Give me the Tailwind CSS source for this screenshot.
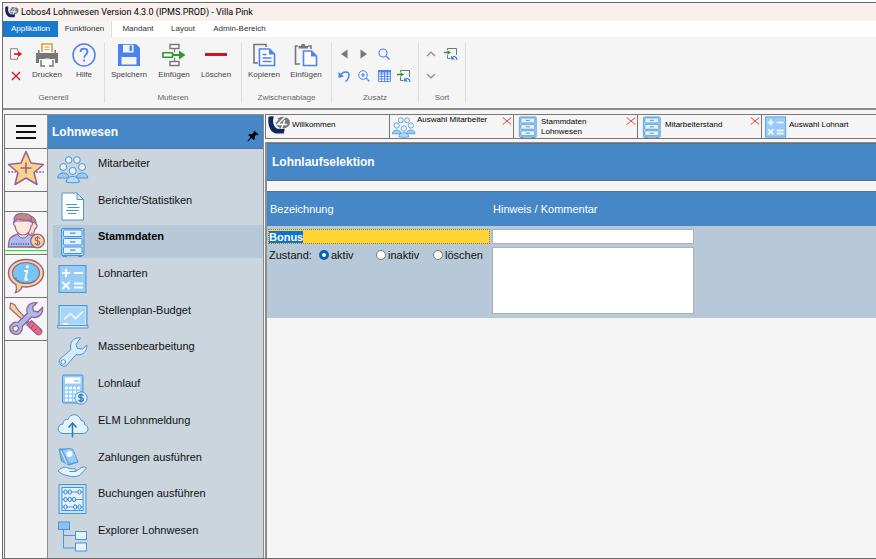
<!DOCTYPE html>
<html lang="de">
<head>
<meta charset="utf-8">
<meta name="viewport" content="width=device-width, initial-scale=1">
<title>Lobos4 Lohnwesen</title>
<script src="https://cdn.jsdelivr.net/npm/@tailwindcss/browser@4"></script>
</head>
<body class="bg-white pl-0.5 pt-0.5 font-['Liberation_Sans',Arial,sans-serif] text-[#1b1b1b]">

<svg class="hidden" aria-hidden="true">
  <symbol id="logo" viewBox="0 0 24 20">
    <path d="M.5 1.500C2 .6 4 .6 6 1c-1.500 6-.5 10.500 3.500 13h8l-1 4.800H8C2 17.500-.5 10 .5 1.500z" fill="#14265f"/>
    <ellipse cx="15.500" cy="7.500" rx="7.500" ry="6" fill="#77777f"/>
    <path d="M18 1.500L10 9.500h10M17.500 5L14 14M10.500 3.500L8 7" fill="none" stroke="#fff" stroke-width="1.500"/>
  </symbol>
  <symbol id="people" viewBox="0 0 32 32">
    <g stroke="#4a93d4" stroke-width="1">
      <g fill="#e4f2fd"><circle cx="11.700" cy="7" r="3.300"/><circle cx="20" cy="7" r="3.300"/><circle cx="6.300" cy="14" r="3.500"/><circle cx="25" cy="14" r="3.500"/></g>
      <path d="M.6 25c0-3.500 2.500-5 5.700-5s5.700 1.500 5.700 5zM19.400 25c0-3.500 2.500-5 5.700-5s5.700 1.500 5.700 5z" fill="#98ccf8"/>
      <circle cx="15.700" cy="18" r="3.600" fill="#e4f2fd"/>
      <path d="M9 29c.5-3.500 3-5.500 6.700-5.500s6.200 2 6.700 5.500c-4 1-9.400 1-13.400 0z" fill="#b5dafa"/>
    </g>
  </symbol>
  <symbol id="doc" viewBox="0 0 32 32">
    <path d="M5 3h15l6.500 6.500V30H5z" fill="#fff" stroke="#4a93d4"/>
    <path d="M20 3v6.500h6.500z" fill="#d8ecfd" stroke="#4a93d4"/>
    <path d="M9 14.500h11M10.500 17.500h12M9 20.500h13M11 23.500h8" stroke="#4a93d4"/>
  </symbol>
  <symbol id="drawer" viewBox="0 0 32 32">
    <path d="M6 28.500h4V31H6zM21 28.500h4V31h-4z" fill="#4a93d4"/>
    <rect x="4.500" y="2.500" width="22.500" height="27" rx="1.500" fill="#a9d4f9" stroke="#4a93d4"/>
    <g fill="#e4f2fd" stroke="#4a93d4"><rect x="6.500" y="4" width="18.500" height="6.500" rx=".8"/><rect x="6.500" y="12.500" width="18.500" height="6.500" rx=".8"/><rect x="6.500" y="21" width="18.500" height="6.500" rx=".8"/></g>
    <path d="M13 7.200h5.500M13 15.800h5.500M13 24.200h5.500" stroke="#4a93d4" stroke-width="1.200"/>
  </symbol>
  <symbol id="mathops" viewBox="0 0 32 32">
    <rect x="2" y="2.500" width="27" height="27" fill="#98ccf8" stroke="#4a93d4"/>
    <path d="M5 10h8M9 6v8M17 10h9M5.500 19l7 7M12.500 19l-7 7M17 20.500h9M17 24.500h9" stroke="#fff" stroke-width="2"/>
  </symbol>
  <symbol id="board" viewBox="0 0 32 32">
    <rect x="2" y="5.500" width="28" height="21" fill="#98ccf8" stroke="#4a93d4"/>
    <rect x="3.500" y="7" width="25" height="17.500" fill="#a9d4f9" stroke="#d8ecfd" stroke-width=".7"/>
    <path d="M7 19.500l6.500-6 5 5 7.500-7" fill="none" stroke="#fff" stroke-width="1.400"/>
    <path d="M.5 25.500h30.500V28H.5z" fill="#d8ecfd" stroke="#4a93d4"/><path d="M6 23h5v2H6z" fill="#fff"/>
  </symbol>
  <symbol id="wrench" viewBox="0 0 32 32">
    <path d="M23.500 2c-5-1-10 2.500-10 8 0 1.500.2 2.500.5 3.500L2.500 23.500a5 5 0 0 0 6.500 6.500L19 18.500c5 1.500 11-1.500 11-9.500l-4.500 4-5-.5-1.500-4z" fill="#d8ecfd" stroke="#4a93d4"/>
    <circle cx="6.200" cy="26" r="2.300" fill="#eef7fe" stroke="#4a93d4"/>
  </symbol>
  <symbol id="calc" viewBox="0 0 32 32">
    <rect x="5.500" y="2" width="20.500" height="28" rx="1.500" fill="#98ccf8" stroke="#4a93d4"/>
    <rect x="8" y="4.500" width="15.500" height="6" fill="#fff"/><path d="M17 8h5" stroke="#4a93d4" stroke-width=".8"/>
    <path d="M8 15h16M8 19h16M8 23h16M8 27h12" stroke="#fff" stroke-width="2.600" stroke-dasharray="2.800 1.300"/>
    <circle cx="24" cy="25" r="6.200" fill="#d8ecfd" stroke="#4a93d4"/>
    <path d="M26.300 23c-.4-1-1.300-1.300-2.300-1.300-3 0-3 2.900 0 3.200s3 3.300 0 3.300c-1.300 0-2.200-.5-2.500-1.500M24 20.500v9" fill="none" stroke="#2c72bb" stroke-width="1.300"/>
  </symbol>
  <symbol id="cloud" viewBox="0 0 32 32">
    <path d="M6 23.500c-6.500-.5-6.500-9 0-9.500 0-4 3-5 5-4.500 2-6.500 11-6.500 13 1 3 0 4 2 3.500 4 5 1.500 4.500 9-1.500 9z" fill="#e4f2fd" stroke="#4a93d4"/>
    <path d="M15.500 27.500V14M11.500 17.500l4-4.500 4 4.500" fill="none" stroke="#2c78bd" stroke-width="1.500"/>
  </symbol>
  <symbol id="payout" viewBox="0 0 32 32">
    <path d="M2 2h12l7 13-9 3L4.500 14z" fill="#77b5ea" stroke="#4a93d4"/>
    <path d="M5 3l7-1.500 4 1 5 12.500-9 2z" fill="#98ccf8" stroke="#4a93d4" stroke-width=".8"/><circle cx="12.500" cy="7" r="3" fill="#fff"/><path d="M4 4l6 13" stroke="#e4f2fd"/>
    <path d="M1 24c4-4.500 8-4.500 11-2.500l6 .3c2 1-.2 2.700-1.500 2.700h-4 6l6-4c2-1 5-.5 5 .5l-6 6.500c-3 2.500-8 2.500-12 1.500L6 27.500z" fill="#e4f2fd" stroke="#4a93d4"/>
  </symbol>
  <symbol id="abacus" viewBox="0 0 32 32">
    <rect x="2" y="1.500" width="27" height="29" fill="#c5e2fb" stroke="#4a93d4"/><rect x="5" y="4.500" width="21" height="23" fill="#e4f2fd" stroke="#4a93d4"/>
    <path d="M5 9h21M5 16.500h21M5 24h21" stroke="#4a93d4"/>
    <g fill="#d8ecfd" stroke="#3d86c8"><ellipse cx="8.500" cy="9" rx="1.600" ry="2.200"/><ellipse cx="12.800" cy="9" rx="1.600" ry="2.200"/><ellipse cx="22.500" cy="9" rx="1.600" ry="2.200"/><ellipse cx="8.500" cy="16.500" rx="1.600" ry="2.200"/><ellipse cx="12.800" cy="16.500" rx="1.600" ry="2.200"/><ellipse cx="17" cy="16.500" rx="1.600" ry="2.200"/><ellipse cx="8.500" cy="24" rx="1.600" ry="2.200"/><ellipse cx="18.200" cy="24" rx="1.600" ry="2.200"/><ellipse cx="22.500" cy="24" rx="1.600" ry="2.200"/></g>
  </symbol>
  <symbol id="tree" viewBox="0 0 32 32">
    <path d="M6.500 9v19h12M6.500 15.500h12" fill="none" stroke="#4a93d4"/>
    <rect x="1.500" y="2" width="11" height="7.500" fill="#88c2f5" stroke="#4a93d4"/>
    <rect x="18.500" y="11.500" width="11" height="8" fill="#e4f2fd" stroke="#4a93d4"/><rect x="18.500" y="23" width="11" height="8" fill="#e4f2fd" stroke="#4a93d4"/>
  </symbol>
  <symbol id="close" viewBox="0 0 10 8"><path d="M.6.5l8.800 7M9.400.5l-8.800 7" stroke="#e8493a" stroke-width="1"/></symbol>
  <symbol id="insertlink" viewBox="0 0 14 14">
    <path d="M3.500 3V1.500h9V8M3.500 8v3.500h3" fill="none" stroke="#777"/>
    <path d="M0 5.500h4" stroke="#2a9a2f" stroke-width="1.500"/><path d="M3.500 3.200L7 5.500 3.500 7.800z" fill="#2a9a2f"/>
    <path d="M8.500 11c1-2.500 4-2 4.500 2" fill="none" stroke="#4a82f0" stroke-width="1.300"/><path d="M7 8.500v4h4z" fill="#4a82f0"/>
  </symbol>
</svg>

<div class="flex h-[calc(100vh-2px)] min-h-[520px] flex-col overflow-hidden border-y border-l border-[#6a6a6a] bg-[#f5f5f5]">

  <header class="flex h-[18px] shrink-0 items-center gap-0.5 bg-[#f7f0ed] pl-0.5">
    <svg class="h-3 w-3.5"><use href="#logo"/></svg>
    <h1 class="font-['Roboto','Noto_Sans',sans-serif] text-[9px] leading-3 text-black">Lobos4 Lohnwesen Version 4.3.0 (IPMS.PROD) - Villa Pink</h1>
  </header>

  <nav class="flex h-4 shrink-0 bg-white text-[8px] text-[#333]">
    <button class="w-[55px] bg-[#1979ca] text-white">Applikation</button>
    <button class="w-[54px] border-r border-[#ddd] bg-[#f5f5f5]">Funktionen</button>
    <button class="w-[52px]">Mandant</button>
    <button class="w-[38px]">Layout</button>
    <button class="w-[75px]">Admin-Bereich</button>
  </nav>

  <section class="flex h-[71px] shrink-0 items-start pt-[6px] text-[8px] text-[#444]">
    <div class="flex h-[60px] w-[102px] flex-col justify-between border-r border-[#dedede]">
      <div class="flex pl-[3px]">
        <div class="flex w-5 flex-col">
          <button class="flex h-[22px] items-center justify-center" aria-label="Beenden"><svg class="h-3 w-3.5" viewBox="0 0 14 12"><path d="M8.500 3V.7H1.500v10.600h7V9" fill="none" stroke="#888"/><path d="M5 6h5" stroke="#d8141c" stroke-width="1.600"/><path d="M9 3l4 3-4 3z" fill="#d8141c"/></svg></button>
          <button class="flex h-[22px] items-center justify-center" aria-label="Abbrechen"><svg class="size-2.5" viewBox="0 0 10 10"><path d="M1 1l8 8M9 1L1 9" stroke="#d8141c" stroke-width="1.400"/></svg></button>
        </div>
        <button class="flex w-[42px] flex-col items-center gap-[3px]"><svg class="size-6" viewBox="0 0 24 24"><path d="M7 9V1h10v8" fill="#fff" stroke="#d99a3c" stroke-width="1.600"/><path d="M9.500 4h5M9.500 6.500h5" stroke="#d99a3c" stroke-width="1.200"/><path d="M1 10h22v10h-3v-4H4v4H1z" fill="#777"/><path d="M3 7h1.500v3H3zM19.500 7H21v3h-1.500z" fill="#777"/><path d="M6 17v6h12v-6" fill="#fff" stroke="#777" stroke-width="1.500"/><path d="M10 16.500h4M10 23h4" stroke="#f5f5f5" stroke-width="2"/></svg><span class="leading-[10px]">Drucken</span></button>
        <button class="flex w-8 flex-col items-center gap-[3px]"><svg class="size-6" viewBox="0 0 24 24"><circle cx="12" cy="12" r="11" fill="none" stroke="#4b82f3" stroke-width="1.500"/><path d="M8.500 9c0-4.500 7-4.500 7 0 0 2.500-3.400 2.700-3.400 5.800M12.100 16.500v2" fill="none" stroke="#4b82f3" stroke-width="1.800"/></svg><span class="leading-[10px]">Hilfe</span></button>
      </div>
      <h2 class="text-center leading-[10px] text-[#666]">Generell</h2>
    </div>
    <div class="flex h-[60px] w-[137px] flex-col justify-between border-r border-[#dedede]">
      <div class="flex pl-0.5">
        <button class="flex w-11 flex-col items-center gap-[3px]"><svg class="size-6" viewBox="0 0 24 24"><path d="M1 1h18l4 4v18H1z" fill="#4b82f3"/><path d="M6 1.800h10.500v7.700H6z" fill="#f5f5f5"/><path d="M12.500 2.500H15V8h-2.500z" fill="#4b82f3"/><path d="M4.500 14h15v7.500h-15z" fill="#f5f5f5"/></svg><span class="leading-[10px]">Speichern</span></button>
        <button class="flex w-[46px] flex-col items-center gap-[3px]"><svg class="size-6" viewBox="0 0 24 24"><path d="M8 1.500h9v4H8zM8 18.500h9v4H8z" fill="#fff" stroke="#777" stroke-width="1.400"/><path d="M12.500 6v3M12.500 15v3" stroke="#777"/><path d="M1 9.800h9.500v4.500H1z" fill="#fff" stroke="#2a9a2f" stroke-width="1.600"/><path d="M11 12h7" stroke="#2a9a2f" stroke-width="2"/><path d="M17 7.500l6.500 4.500-6.500 4.500z" fill="#2a9a2f"/></svg><span class="leading-[10px]">Einfügen</span></button>
        <button class="flex w-[38px] flex-col items-center gap-[3px]"><svg class="size-6" viewBox="0 0 24 24"><path d="M1 10h22v3H1z" fill="#cf1420"/></svg><span class="leading-[10px]">Löschen</span></button>
      </div>
      <h2 class="text-center leading-[10px] text-[#666]">Mutieren</h2>
    </div>
    <div class="flex h-[60px] w-[90px] flex-col justify-between border-r border-[#dedede]">
      <div class="flex pl-px">
        <button class="flex w-[42px] flex-col items-center gap-[3px]"><svg class="size-6" viewBox="0 0 24 24"><path d="M14 4V1.500H2V20h4" fill="none" stroke="#777" stroke-width="1.600"/><path d="M7.500 6h10l5 5v11.500h-15z" fill="#fff" stroke="#4b82f3" stroke-width="1.600"/><path d="M17 6v5.500h5.500z" fill="#4b82f3"/><path d="M10.500 11.500h4M10.500 15h9M10.500 18.500h9" stroke="#4b82f3" stroke-width="1.500"/></svg><span class="leading-[10px]">Kopieren</span></button>
        <button class="flex w-[42px] flex-col items-center gap-[3px]"><svg class="size-6" viewBox="0 0 24 24"><path d="M4 3H1.500v18H6M14 3h3v3" fill="none" stroke="#777" stroke-width="1.600"/><path d="M4.500 5.500V3h2.500c0-3 4.500-3 4.500 0H14v2.500z" fill="#777"/><path d="M9.500 8h8l5 5v9.500h-13z" fill="#fff" stroke="#4b82f3" stroke-width="1.600"/><path d="M17 8v5.500h5.500z" fill="#4b82f3"/></svg><span class="leading-[10px]">Einfügen</span></button>
      </div>
      <h2 class="text-center leading-[10px] text-[#666]">Zwischenablage</h2>
    </div>
    <div class="flex h-[60px] w-[87px] flex-col justify-between border-r border-[#dedede]">
      <div class="grid auto-rows-[22px] grid-cols-[repeat(4,20px)] place-items-center pl-0.5">
        <button aria-label="Zurück"><svg class="size-3" viewBox="0 0 12 12"><path d="M9.500 1.500v9L3 6z" fill="#777"/></svg></button>
        <button aria-label="Vor"><svg class="size-3" viewBox="0 0 12 12"><path d="M2.500 1.500v9L9 6z" fill="#777"/></svg></button>
        <button aria-label="Suchen"><svg class="size-3" viewBox="0 0 12 12"><circle cx="5" cy="5" r="4" fill="none" stroke="#4b82f3" stroke-width="1.100"/><path d="M8 8l3.500 3.500" stroke="#4b82f3" stroke-width="1.300"/></svg></button>
        <span></span>
        <button aria-label="Rückgängig"><svg class="size-3" viewBox="0 0 12 12"><path d="M2.500 5.500C5 .5 11 1 11 5c0 3-1.500 5-3.500 6.500" fill="none" stroke="#4b82f3" stroke-width="1.500"/><path d="M.5 2v6l5.500-1.500z" fill="#4b82f3"/></svg></button>
        <button aria-label="Vergrössern"><svg class="size-3" viewBox="0 0 12 12"><circle cx="5" cy="5" r="4.300" fill="none" stroke="#4b82f3"/><path d="M8.200 8.200l3.300 3.300M3 5h4M5 3v4" stroke="#4b82f3" stroke-width="1.200"/></svg></button>
        <button aria-label="Tabelle"><svg class="h-3 w-[13px]" viewBox="0 0 13 12"><path d="M.5.5h12v11H.5zM.5 4h12M.5 6.500h12M.5 9h12M3.500 2v9.500M6.500 2v9.500M9.500 2v9.500" fill="#fff" stroke="#4b82f3" stroke-width=".9"/><path d="M0 0h13v2.500H0z" fill="#4b82f3"/></svg></button>
        <button aria-label="Übernehmen"><svg class="size-3.5"><use href="#insertlink"/></svg></button>
      </div>
      <h2 class="text-center leading-[10px] text-[#666]">Zusatz</h2>
    </div>
    <div class="flex h-[60px] w-[47px] flex-col justify-between border-r border-[#dedede]">
      <div class="grid auto-rows-[22px] grid-cols-[repeat(2,20px)] place-items-center pl-0.5">
        <button aria-label="Aufsteigend"><svg class="h-2 w-2.5" viewBox="0 0 10 8"><path d="M1 6l4-4 4 4" fill="none" stroke="#888" stroke-width="1.200"/></svg></button>
        <button aria-label="Sortierung übernehmen"><svg class="size-3.5"><use href="#insertlink"/></svg></button>
        <button aria-label="Absteigend"><svg class="h-2 w-2.5" viewBox="0 0 10 8"><path d="M1 2l4 4 4-4" fill="none" stroke="#888" stroke-width="1.200"/></svg></button>
      </div>
      <h2 class="text-center leading-[10px] text-[#666]">Sort</h2>
    </div>
  </section>

  <div class="flex min-h-0 flex-1 border-t-2 border-[#8c8c8c] pl-px pt-1">

    <nav class="flex w-[43px] shrink-0 flex-col border-l border-t border-[#777]" aria-label="Bereiche">
      <button class="flex h-[34px] items-center justify-center border-b border-[#777]" aria-label="Menü"><svg class="h-4 w-5" viewBox="0 0 20 16"><path d="M0 2h20M0 8h20M0 14h20" stroke="#111" stroke-width="2"/></svg></button>
      <button class="flex h-[43px] items-start justify-center border-b border-[#777] pt-px" aria-label="Favoriten"><svg class="h-9 w-[38px]" viewBox="0 0 38 36"><path d="M1 22h8M29 22h8" stroke="#8f62a8" stroke-width="1.600" stroke-dasharray="2 1.200"/><path d="M19 1.500l5 11.500 12.500 1.500-9.500 8 3 12L19 28 8 34.500l3-12-9.500-8L14 13z" fill="#fbd489" stroke="#94619b" stroke-width="1.500" stroke-linejoin="round"/><path d="M19 12.500v11M13.500 18h11" stroke="#94619b" stroke-width="1.600"/></svg></button>
      <div class="h-5 border-b border-[#777]"></div>
      <button class="flex h-[43px] flex-col items-center border-b border-[#777]" aria-label="Lohnwesen"><svg class="h-[38px] w-[38px] shrink-0" viewBox="0 0 38 38"><path d="M21 6c5-2 8 1 8 6 2 1 1 4-1 5-1 3-2 4-1 6l8 4-2 8H22z" fill="#f9dccb" stroke="#94619b" stroke-width="1.200"/><path d="M24 20l5 4 5 2v6h-9z" fill="#e8687c"/><path d="M20 4c5-1 9 2 9 8l-3-2-4 2z" fill="#c08a83" stroke="#94619b"/><path d="M1.500 35c-.5-10 4-11 9-13h11c5 2 8 4 8 13z" fill="#a9bdea" stroke="#94619b" stroke-width="1.300"/><path d="M11 20v3c3 4 7 4 10 0v-3z" fill="#f9dccb" stroke="#94619b"/><path d="M8 9c-2 0-2 4 0 5 1 6 4 9 8 9s7-3 8-9c2-1 2-5 0-5z" fill="#fde9dc" stroke="#94619b" stroke-width="1.200"/><path d="M7.500 10C6 4 10 1 16 1.500c7 0 9.500 3 8 8.500l-2-2c-5 1-9-1-12-1z" fill="#c08a83" stroke="#94619b" stroke-width="1.200"/><path d="M4 32h19" stroke="#6f6fb0" stroke-width="2" stroke-dasharray="1.200 1.200"/><circle cx="30.500" cy="29" r="6.800" fill="#fbd489" stroke="#94619b" stroke-width="1.300"/><path d="M33 26.800c-.6-1.200-1.400-1.500-2.500-1.500-3 0-3 3.300 0 3.600s3 3.800 0 3.800c-1.400 0-2.300-.6-2.600-1.700M30.500 24v10" fill="none" stroke="#94619b" stroke-width="1.100"/></svg><span class="h-px w-full bg-[#12f012]"></span></button>
      <button class="flex h-[43px] items-center justify-center border-b border-[#777]" aria-label="Information"><svg class="h-9 w-[38px]" viewBox="0 0 38 36"><path d="M19 1.500c10 0 17.500 6 17.500 13.500S29 29 19 29c-2 0-3-.2-4-.4-1 3-3 5-6.500 6 1.200-2.400 1.400-5 .5-8C4.500 24 1.500 20 1.500 15 1.500 7.500 9 1.500 19 1.500z" fill="#fbd489" stroke="#94619b" stroke-width="1.400"/><ellipse cx="19" cy="15" rx="13.500" ry="10.500" fill="#76c6f5" stroke="#94619b" stroke-width="1.200"/><circle cx="20.500" cy="8.500" r="1.500" fill="#fff"/><path d="M17 13h3.200l-2 8.500h3" fill="none" stroke="#fff" stroke-width="1.800"/><path d="M8.500 20c4 5 9 5.500 13 4.500" fill="none" stroke="#4b79bc" stroke-width="1.500" stroke-dasharray="1.500 1.500"/></svg></button>
      <button class="flex h-[43px] items-center justify-center border-b border-[#777]" aria-label="Werkzeuge"><svg class="h-9 w-9" viewBox="0 0 36 36"><path d="M2.500 2l4 1.500 3 5 11 12-2 2-12-11-4.500-4z" fill="#fbd489" stroke="#94619b" stroke-width="1.200"/><path d="M19 24l4.500-4.500 9.500 9c2.500 3-1.500 7-4.500 4.500z" fill="#e8687c" stroke="#94619b" stroke-width="1.200"/><path d="M22.500 27.500l3-3M25.500 30.500l3-3" stroke="#b13e68"/><path d="M29 1.800c-7-1.500-12 4.500-9.500 10.200L10 21.500c-5-1.500-9 3-8 7s6.500 6.500 10 3.500c2.500-2 2.500-4 2.300-6.500L23.500 16c6 2 12-2.500 11-9.500l-4.500 4.500-4.500-1-1-4z" fill="#adbbe4" stroke="#94619b" stroke-width="1.300"/><path d="M5 26l4-1.500 2 3-2.500 3-3.500-1z" fill="#f5f5f5" stroke="#94619b" stroke-width="1.200"/></svg></button>
    </nav>

    <aside class="flex w-[217px] shrink-0 flex-col border-x border-t border-[#8c8c8c] bg-[#cad5de]">
      <div class="flex h-[34px] shrink-0 items-center justify-between border-b border-[#56789b] bg-[#4688c7] pl-1 pr-1">
        <h2 class="text-[12px] font-bold leading-4 text-white">Lohnwesen</h2>
        <button class="pt-2" aria-label="Anheften"><svg class="size-3" viewBox="0 0 12 12"><path d="M7 .8l4.500 3.500-1 1-1.500-.2-1.500 2 .3 2.200-1 .7L4.500 8 1 11.500l-.5-.4L3.500 7 1.300 5l.9-1 2.500.3 2-1.700z" fill="#000"/></svg></button>
      </div>
      <ul class="flex flex-1 flex-col justify-between pb-[6px] pl-[5px] pt-[3px] text-[11px] text-[#111]">
        <li><a href="#" class="flex h-[33px] gap-[9px] pl-1"><svg class="mt-px size-8"><use href="#people"/></svg><span class="leading-[22px]">Mitarbeiter</span></a></li>
        <li><a href="#" class="flex h-[33px] gap-[9px] pl-1"><svg class="mt-px size-8"><use href="#doc"/></svg><span class="leading-[22px]">Berichte/Statistiken</span></a></li>
        <li><a href="#" class="flex h-[33px] gap-[9px] bg-[#b7c9d9] pl-1 font-bold text-black" aria-current="page"><svg class="mt-px size-8"><use href="#drawer"/></svg><span class="leading-[22px]">Stammdaten</span></a></li>
        <li><a href="#" class="flex h-[33px] gap-[9px] pl-1"><svg class="mt-px size-8"><use href="#mathops"/></svg><span class="leading-[22px]">Lohnarten</span></a></li>
        <li><a href="#" class="flex h-[33px] gap-[9px] pl-1"><svg class="mt-px size-8"><use href="#board"/></svg><span class="leading-[22px]">Stellenplan-Budget</span></a></li>
        <li><a href="#" class="flex h-[33px] gap-[9px] pl-1"><svg class="mt-px size-8"><use href="#wrench"/></svg><span class="leading-[22px]">Massenbearbeitung</span></a></li>
        <li><a href="#" class="flex h-[33px] gap-[9px] pl-1"><svg class="mt-px size-8"><use href="#calc"/></svg><span class="leading-[22px]">Lohnlauf</span></a></li>
        <li><a href="#" class="flex h-[33px] gap-[9px] pl-1"><svg class="mt-px size-8"><use href="#cloud"/></svg><span class="leading-[22px]">ELM Lohnmeldung</span></a></li>
        <li><a href="#" class="flex h-[33px] gap-[9px] pl-1"><svg class="mt-px size-8"><use href="#payout"/></svg><span class="leading-[22px]">Zahlungen ausführen</span></a></li>
        <li><a href="#" class="flex h-[33px] gap-[9px] pl-1"><svg class="mt-px size-8"><use href="#abacus"/></svg><span class="leading-[22px]">Buchungen ausführen</span></a></li>
        <li><a href="#" class="flex h-[33px] gap-[9px] pl-1"><svg class="mt-px size-8"><use href="#tree"/></svg><span class="leading-[22px]">Explorer Lohnwesen</span></a></li>
      </ul>
    </aside>

    <main class="flex min-w-0 flex-1 flex-col pl-px">
      <div class="flex h-[25px] shrink-0 overflow-hidden border-y border-l border-[#777] text-[8px] leading-[10px] text-black">
        <div class="flex w-[124px] shrink-0 items-center gap-px border-r border-[#777] pb-1 pl-0.5"><svg class="h-5 w-[23px] shrink-0"><use href="#logo"/></svg><a href="#">Willkommen</a></div>
        <div class="flex w-[124px] shrink-0 items-center gap-px border-r border-[#777] pl-0.5 pr-px"><svg class="size-6 shrink-0"><use href="#people"/></svg><a href="#" class="flex-1 self-start whitespace-nowrap">Auswahl Mitarbeiter</a><button class="self-start pt-0.5" aria-label="Auswahl Mitarbeiter schliessen"><svg class="h-2 w-2.5"><use href="#close"/></svg></button></div>
        <div class="flex w-[124px] shrink-0 items-center gap-px border-r border-[#777] pl-0.5 pr-px"><svg class="size-6 shrink-0"><use href="#drawer"/></svg><a href="#" class="flex-1">Stammdaten<br>Lohnwesen</a><button class="self-start pt-0.5" aria-label="Stammdaten schliessen"><svg class="h-2 w-2.5"><use href="#close"/></svg></button></div>
        <div class="flex w-[124px] shrink-0 items-center gap-px border-r border-[#777] pl-0.5 pr-px"><svg class="size-6 shrink-0"><use href="#drawer"/></svg><a href="#" class="flex-1 pb-1">Mitarbeiterstand</a><button class="self-start pt-0.5" aria-label="Mitarbeiterstand schliessen"><svg class="h-2 w-2.5"><use href="#close"/></svg></button></div>
        <div class="flex w-[124px] shrink-0 items-center gap-px border-r border-[#777] pl-0.5 pr-px"><svg class="size-6 shrink-0"><use href="#mathops"/></svg><a href="#" class="flex-1 pb-1">Auswahl Lohnart</a></div>
      </div>

      <div class="mt-[3px] flex flex-1 flex-col border-l-2 border-t border-[#8c8c8c]">
        <h2 class="flex h-[38px] items-center border-y border-[#5d6f84] bg-[#4688c7] pl-[5px] text-[12px] font-bold text-white">Lohnlaufselektion</h2>
        <form class="mt-2.5 text-[11px]">
          <div class="grid h-[35px] grid-cols-[223px_1fr] items-center border-t border-[#5d6f84] bg-[#4688c7] pl-[3px] text-white">
            <label for="bez">Bezeichnung</label><label for="hinweis">Hinweis / Kommentar</label>
          </div>
          <div class="grid grid-cols-[222px_202px] gap-x-0.5 bg-[#b7c9d9] pb-1 pl-px pt-[3px] text-[#111]">
            <div class="flex flex-col gap-[3px]">
              <input id="bez" value="Bonus" class="h-[15px] w-full border border-dotted border-[#777] bg-[#ffd633] font-bold leading-[13px] outline-none selection:bg-[#0a74d6] selection:text-white">
              <fieldset class="flex h-4 items-center pl-px">
                <legend class="float-left w-[50px]">Zustand:</legend>
                <label class="flex w-[57px] items-center gap-0.5"><input type="radio" name="zustand" checked class="size-2.5 appearance-none rounded-full border border-[#777] bg-white checked:border-[3px] checked:border-[#0a5fb8]">aktiv</label>
                <label class="flex w-[57px] items-center gap-0.5"><input type="radio" name="zustand" class="size-2.5 appearance-none rounded-full border border-[#777] bg-white checked:border-[3px] checked:border-[#0a5fb8]">inaktiv</label>
                <label class="flex items-center gap-0.5"><input type="radio" name="zustand" class="size-2.5 appearance-none rounded-full border border-[#777] bg-white checked:border-[3px] checked:border-[#0a5fb8]">löschen</label>
              </fieldset>
            </div>
            <div class="flex flex-col gap-[3px]">
              <input id="hinweis" class="h-[15px] w-full border border-[#a9b2ba] bg-white px-1">
              <textarea aria-label="Kommentar" class="block h-[67px] w-full resize-none border border-[#a9b2ba] bg-white px-1"></textarea>
            </div>
          </div>
        </form>
      </div>
    </main>
  </div>
</div>
<script>
  const bez = document.getElementById('bez');
  bez.focus();
  bez.select();
</script>
</body>
</html>
